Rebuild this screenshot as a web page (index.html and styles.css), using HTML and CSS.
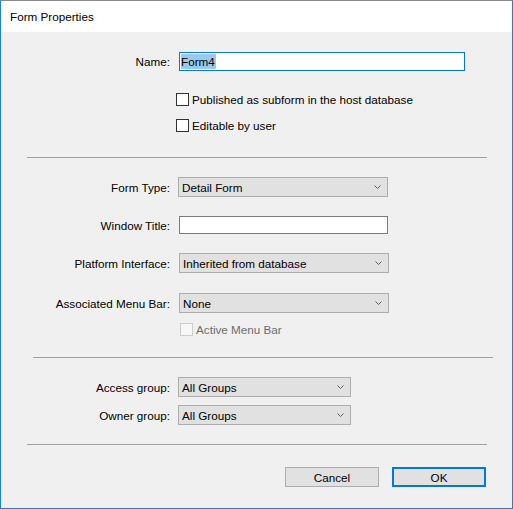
FILE: index.html
```html
<!DOCTYPE html>
<html>
<head>
<meta charset="utf-8">
<link rel="stylesheet" href="styles.css">
</head>
<body>
<div class="window">
  <div class="titlebar">Form Properties</div>
  <div class="content">
    <div class="row row-name">
      <span class="lbl">Name:</span>
      <div class="input input-name focused"><span class="selected">Form4</span></div>
    </div>
    <div class="check-row cr-1"><span class="cb"></span><span class="cb-text">Published as subform in the host database</span></div>
    <div class="check-row cr-2"><span class="cb"></span><span class="cb-text">Editable by user</span></div>
    <div class="sep sep-1"></div>

    <div class="row row-formtype">
      <span class="lbl">Form Type:</span>
      <div class="select sel-formtype"><span class="sel-text">Detail Form</span><svg class="chev" width="7" height="4" viewBox="0 0 7 4"><polyline points="0.5,0.5 3.5,3.5 6.5,0.5" fill="none" stroke="#606060" stroke-width="1"/></svg></div>
    </div>
    <div class="row row-wintitle">
      <span class="lbl">Window Title:</span>
      <div class="input input-wintitle"></div>
    </div>
    <div class="row row-platform">
      <span class="lbl">Platform Interface:</span>
      <div class="select sel-wide"><span class="sel-text">Inherited from database</span><svg class="chev" width="7" height="4" viewBox="0 0 7 4"><polyline points="0.5,0.5 3.5,3.5 6.5,0.5" fill="none" stroke="#606060" stroke-width="1"/></svg></div>
    </div>
    <div class="row row-menubar">
      <span class="lbl">Associated Menu Bar:</span>
      <div class="select sel-wide"><span class="sel-text">None</span><svg class="chev" width="7" height="4" viewBox="0 0 7 4"><polyline points="0.5,0.5 3.5,3.5 6.5,0.5" fill="none" stroke="#606060" stroke-width="1"/></svg></div>
    </div>
    <div class="check-row cr-active disabled"><span class="cb"></span><span class="cb-text">Active Menu Bar</span></div>
    <div class="sep sep-2"></div>

    <div class="row row-access">
      <span class="lbl">Access group:</span>
      <div class="select sel-group"><span class="sel-text">All Groups</span><svg class="chev" width="7" height="4" viewBox="0 0 7 4"><polyline points="0.5,0.5 3.5,3.5 6.5,0.5" fill="none" stroke="#606060" stroke-width="1"/></svg></div>
    </div>
    <div class="row row-owner">
      <span class="lbl">Owner group:</span>
      <div class="select sel-group"><span class="sel-text">All Groups</span><svg class="chev" width="7" height="4" viewBox="0 0 7 4"><polyline points="0.5,0.5 3.5,3.5 6.5,0.5" fill="none" stroke="#606060" stroke-width="1"/></svg></div>
    </div>
    <div class="sep sep-3"></div>

    <div class="buttons">
      <div class="btn">Cancel</div>
      <div class="btn btn-default">OK</div>
    </div>
  </div>
</div>
</body>
</html>
```

FILE: styles.css
```css
* { box-sizing: border-box; }
html, body { margin: 0; padding: 0; }
body {
  width: 513px;
  height: 509px;
  font-family: "Liberation Sans", Arial, sans-serif;
  font-size: 11.7px;
  color: #000;
  background: #f0f0f0;
}
.window {
  width: 513px;
  height: 509px;
  border-left: 1px solid #1a83d8;
  border-right: 1px solid #1a83d8;
  border-bottom: 1px solid #1a83d8;
  border-top: 1px solid #8a8a8a;
  display: flex;
  flex-direction: column;
  background: #f0f0f0;
}
.titlebar {
  height: 31px;
  background: #fff;
  display: flex;
  align-items: center;
  padding-left: 9px;
  flex: none;
}
.content {
  flex: 1;
  display: flex;
  flex-direction: column;
  background: #f0f0f0;
}
.row {
  display: flex;
  align-items: center;
  height: 20px;
  flex: none;
}
.lbl {
  width: 169px;
  text-align: right;
  white-space: nowrap;
  flex: none;
}
.input {
  background: #fff;
  border: 1px solid #7a7a7a;
  height: 100%;
  display: flex;
  align-items: center;
  padding-left: 1px;
}
.input.focused { border-color: #0078d7; }
.selected {
  background: #99c9ef;
  line-height: 15px;
  padding-right: 1px;
}
.select {
  height: 100%;
  background: #e1e1e1;
  border: 1px solid #adadad;
  display: flex;
  align-items: center;
  justify-content: space-between;
  padding-left: 3px;
  padding-right: 6px;
  flex: none;
}
.chev { display: block; flex: none; }

.row-name { margin-top: 20px; height: 19px; }
.input-name { width: 286px; margin-left: 9px; }
.row-formtype { margin-top: 19px; }
.sel-formtype { width: 210px; margin-left: 8px; }
.row-wintitle { margin-top: 19px; height: 18px; }
.input-wintitle { width: 209px; margin-left: 9px; }
.row-platform { margin-top: 19px; }
.row-menubar { margin-top: 20px; }
.sel-wide { width: 210px; margin-left: 9px; }
.row-access { margin-top: 19px; }
.row-owner { margin-top: 8px; }
.sel-group { width: 173px; margin-left: 8px; }

.check-row {
  display: flex;
  align-items: center;
  height: 13px;
  flex: none;
}
.cb {
  width: 13px;
  height: 13px;
  border: 1px solid #333;
  background: #fff;
  flex: none;
  margin-right: 3px;
}
.cr-1 { margin-top: 22px; padding-left: 175px; }
.cr-2 { margin-top: 13px; padding-left: 175px; }
.cr-active { margin-top: 10px; padding-left: 179px; }
.disabled .cb { border-color: #cccccc; background: #f7f7f7; }
.disabled .cb-text { color: #6d6d6d; }

.sep {
  height: 1px;
  background: #a0a0a0;
  flex: none;
}
.sep-1 { margin: 25px 0 0 26px; width: 460px; }
.sep-2 { margin: 21px 0 0 32px; width: 460px; }
.sep-3 { margin: 19px 0 0 26px; width: 460px; }

.buttons {
  display: flex;
  justify-content: flex-end;
  gap: 13px;
  margin-top: 22px;
  padding-right: 26px;
  flex: none;
}
.btn {
  width: 94px;
  height: 20px;
  background: #e1e1e1;
  border: 1px solid #adadad;
  display: flex;
  align-items: center;
  justify-content: center;
}
.btn-default { border: 2px solid #0078d7; }
```
